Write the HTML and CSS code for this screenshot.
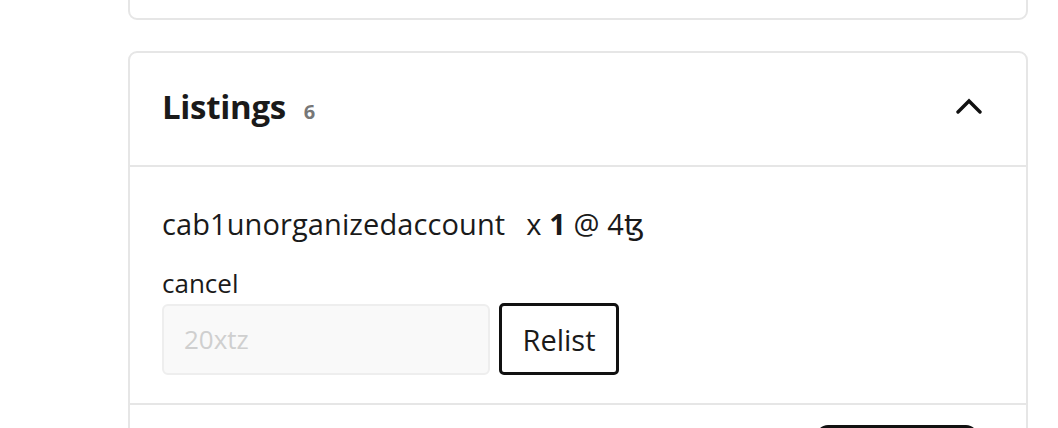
FILE: index.html
```html
<!DOCTYPE html>
<html>
<head>
<meta charset="utf-8">
<link rel="stylesheet" href="styles.css">
</head>
<body>
<div class="page">
  <div class="card card-prev"></div>
  <div class="card">
    <div class="card-header">
      <h2 class="title">Listings <span class="count">6</span></h2>
      <svg class="chevron" width="26" height="16" viewBox="0 0 26 16"><path d="M2 14 L13 3 L24 14" fill="none" stroke="#111" stroke-width="3.4" stroke-linecap="round" stroke-linejoin="miter"/></svg>
    </div>
    <div class="listing">
      <div class="listing-line"><span class="seller">cab1unorganizedaccount</span><span class="qty">x <b>1</b> @ 4ꜩ</span></div>
      <div class="cancel">cancel</div>
      <div class="relist-row">
        <input class="price" type="text" placeholder="20xtz">
        <button class="relist">Relist</button>
      </div>
    </div>
    <div class="listing next">
      <button class="buy"></button>
    </div>
  </div>
</div>
</body>
</html>
```
FILE: styles.css
```css
html, body {
  margin: 0;
  padding: 0;
  background: #fff;
  overflow: hidden;
}
body {
  font-family: "Open Sans", "DejaVu Sans", sans-serif;
  color: #1a1a1a;
}
.page {
  width: 900px;
  margin-left: 128px;
  display: flex;
  flex-direction: column;
  gap: 31px;
}
.card {
  border: 2px solid #e6e6e6;
  border-radius: 9px;
  background: #fff;
}
.card-prev {
  height: 40px;
  margin-top: -24px;
}
.card-header {
  height: 112px;
  display: flex;
  align-items: center;
  justify-content: space-between;
  padding: 0 44px 0 32px;
  border-bottom: 2px solid #e6e6e6;
}
.title {
  margin: 0;
  font-size: 33px;
  font-weight: 700;
  letter-spacing: -0.3px;
  display: flex;
  align-items: baseline;
  gap: 18px;
  margin-top: -5px;
}
.count {
  font-size: 20px;
  color: #777;
  font-weight: 700;
}
.chevron {
  display: block;
  margin-top: -7px;
}
.listing {
  padding: 39px 32px 28px;
  border-bottom: 2px solid #e6e6e6;
}
.listing-line {
  font-size: 29px;
  line-height: 36px;
  letter-spacing: 0.1px;
  display: flex;
  gap: 21px;
}
.qty b {
  font-weight: 700;
}
.cancel {
  font-size: 26px;
  line-height: 30px;
  margin-top: 26px;
}
.relist-row {
  margin-top: 5px;
  display: flex;
  gap: 9px;
  align-items: center;
}
.price {
  width: 328px;
  height: 71px;
  box-sizing: border-box;
  border: 2px solid #eeeeee;
  background: #f9f9f9;
  border-radius: 6px;
  padding: 0 20px;
  font-family: inherit;
  font-size: 26px;
  color: #333;
  outline: none;
}
.price::placeholder {
  color: #cfcfcf;
}
.relist {
  width: 120px;
  height: 72px;
  box-sizing: border-box;
  border: 3px solid #111;
  border-radius: 5px;
  background: #fff;
  font-family: inherit;
  font-size: 29px;
  color: #1a1a1a;
  padding: 0;
}
.next {
  border-bottom: none;
  padding-top: 20px;
  display: flex;
  justify-content: flex-end;
  padding-right: 48px;
}
.buy {
  width: 162px;
  height: 50px;
  background: #111;
  border: none;
  border-radius: 12px;
}
```
